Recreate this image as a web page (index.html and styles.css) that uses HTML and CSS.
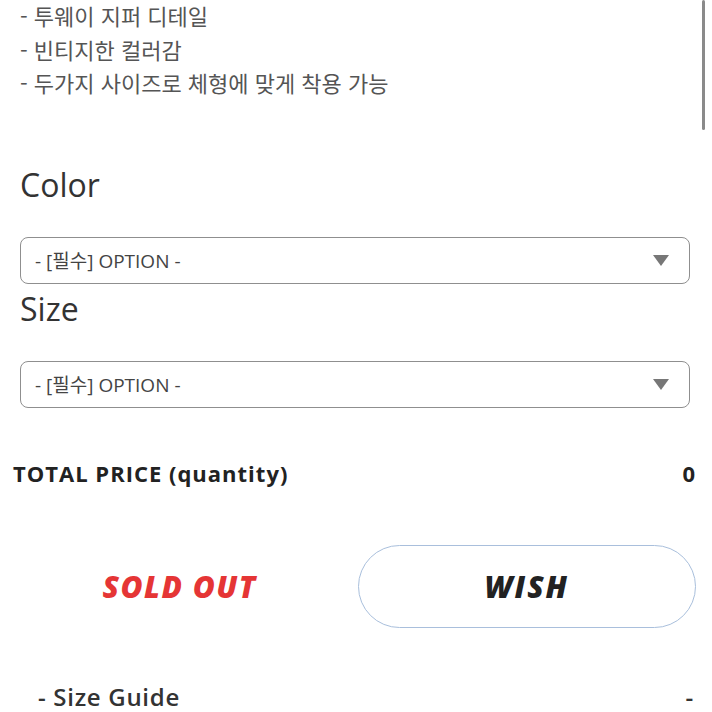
FILE: index.html
```html
<!DOCTYPE html>
<html lang="ko">

<head>
  <meta charset="UTF-8">
  <meta name="viewport" content="width=device-width, initial-scale=1.0">
  <title>Product Option</title>
  <link rel="stylesheet" href="styles.css">
</head>

<body>
  <div class="scroll-thumb"></div>

  <div class="page">
    <ul class="desc">
      <li>- 투웨이 지퍼 디테일</li>
      <li>- 빈티지한 컬러감</li>
      <li>- 두가지 사이즈로 체형에 맞게 착용 가능</li>
    </ul>

    <div class="option">
      <h2 class="option-title">Color</h2>
      <div class="select">
        <span>- [필수] OPTION -</span>
        <span class="arrow"></span>
      </div>
    </div>

    <div class="option">
      <h2 class="option-title">Size</h2>
      <div class="select">
        <span>- [필수] OPTION -</span>
        <span class="arrow"></span>
      </div>
    </div>

    <div class="total">
      <span>TOTAL PRICE (quantity)</span>
      <span>0</span>
    </div>

    <div class="actions">
      <div class="sold-out">SOLD OUT</div>
      <button class="wish">WISH</button>
    </div>

    <div class="guide">
      <span>- Size Guide</span>
      <span>-</span>
    </div>
  </div>
</body>

</html>
```

FILE: styles.css
```css
body {
  margin: 0;
  padding: 0;
  background-color: #fff;
  font-family: "Open Sans", "Noto Sans CJK KR", sans-serif;
  color: #333;
}

.page {
  padding: 0 16px 0 20px;
}

.scroll-thumb {
  position: absolute;
  top: 0;
  right: 7px;
  width: 3px;
  height: 130px;
  background-color: #8a8a8a;
  border-radius: 2px;
}

.desc {
  list-style: none;
  margin: 0;
  padding: 0;
  font-family: "Noto Sans CJK KR", sans-serif;
  font-size: 22px;
  color: #555;
}

.desc li {
  height: 33.5px;
  line-height: 30px;
}

.option {
  margin-top: 62px;
}

.option + .option {
  margin-top: 3px;
}

.option-title {
  margin: 0;
  font-size: 32px;
  font-weight: 400;
  line-height: 44px;
  height: 74px;
  color: #333;
}

.select {
  display: flex;
  justify-content: space-between;
  align-items: center;
  height: 45px;
  border: 1px solid #8f8f8f;
  border-radius: 8px;
  padding: 0 20px 0 14px;
  margin-right: 6px;
  font-size: 19px;
  color: #444;
}

.arrow {
  width: 0;
  height: 0;
  border-left: 8px solid transparent;
  border-right: 8px solid transparent;
  border-top: 11px solid #777;
}

.total {
  display: flex;
  justify-content: space-between;
  margin: 50px 0 0 -7px;
  line-height: 30px;
  font-weight: 700;
  font-size: 22px;
  letter-spacing: 1px;
  color: #222;
}

.actions {
  display: flex;
  align-items: center;
  margin-top: 57px;
}

.sold-out {
  width: 320px;
  text-align: center;
  font-style: italic;
  font-weight: 800;
  font-size: 30px;
  letter-spacing: 1.5px;
  color: #e53535;
}

.wish {
  margin-left: 18px;
  width: 339px;
  height: 83px;
  border: 1px solid #a9bfdc;
  border-radius: 42px;
  background-color: #fff;
  font-family: "Open Sans", sans-serif;
  font-style: italic;
  font-weight: 800;
  font-size: 30px;
  letter-spacing: 2px;
  color: #222;
}

.guide {
  display: flex;
  justify-content: space-between;
  margin: 58px 2px 0 18px;
  line-height: 22px;
  font-size: 24px;
  font-weight: 600;
  letter-spacing: 0.7px;
  color: #333;
}
```
